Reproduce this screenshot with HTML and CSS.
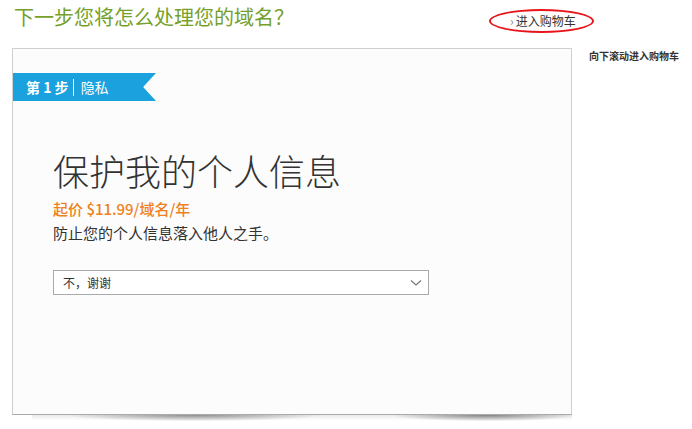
FILE: index.html
```html
<!DOCTYPE html>
<html lang="zh-CN">
<head>
    <meta charset="UTF-8">
    <meta name="viewport" content="width=device-width, initial-scale=1.0">
    <title>下一步您将怎么处理您的域名？</title>
    <link rel="stylesheet" href="styles.css">
</head>
<body>
    <div class="page">
        <div class="main">
            <div class="top">
                <h1 class="headline">下一步您将怎么处理您的域名？</h1>
                <a class="cart-link" href="#"><span class="arrow">›</span>进入购物车</a>
            </div>
            <div class="card">
                <div class="ribbon">
                    <b>第 1 步</b><span class="sep"></span>隐私
                </div>
                <div class="card-body">
                    <h2 class="title">保护我的个人信息</h2>
                    <div class="price">起价 $11.99/域名/年</div>
                    <p class="desc">防止您的个人信息落入他人之手。</p>
                    <div class="select">
                        <span>不，谢谢</span>
                        <svg width="12" height="8" viewBox="0 0 12 8"><path d="M1 1.5 L6 6 L11 1.5" fill="none" stroke="#777" stroke-width="1.2"/></svg>
                    </div>
                </div>
            </div>
            <div class="card-shadow"></div>
        </div>
        <div class="side">向下滚动进入购物车</div>
    </div>
</body>
</html>
```

FILE: styles.css
```css
body {
    margin: 0;
    background: #fff;
    font-family: "Noto Sans CJK SC", "Open Sans", sans-serif;
    color: #333;
}

.page {
    display: flex;
    align-items: flex-start;
}

.main {
    width: 560px;
    margin-left: 12px;
}

.top {
    display: flex;
    align-items: flex-start;
    height: 48px;
    white-space: nowrap;
}

.headline {
    flex-shrink: 0;
    margin: 3px 0 0 2px;
    font-size: 20px;
    font-weight: normal;
    line-height: 28px;
    color: #75a02a;
}

.cart-link {
    position: relative;
    flex-shrink: 0;
    margin: 12px 0 0 216px;
    font-size: 12px;
    line-height: 18px;
    color: #333;
    text-decoration: none;
}

.cart-link::after {
    content: "";
    position: absolute;
    left: -21px;
    top: -3px;
    width: 101px;
    height: 20px;
    border: 2px solid #e8141b;
    border-radius: 50%;
}

.arrow {
    color: #888;
    margin-right: 2px;
}

.card {
    height: 365px;
    border: 1px solid #cfcfcf;
    border-bottom-color: #aaa;
    background: #fcfcfc;
}

.card-shadow {
    height: 8px;
    margin-left: 20px;
    background:
        radial-gradient(ellipse 30% 100% at 30% 0, rgba(0,0,0,0.4), rgba(0,0,0,0) 80%),
        radial-gradient(ellipse 22% 100% at 84% 0, rgba(0,0,0,0.45), rgba(0,0,0,0) 80%),
        linear-gradient(to bottom, rgba(0,0,0,0.08), rgba(0,0,0,0) 70%);
}

.ribbon {
    display: flex;
    align-items: center;
    width: 130px;
    height: 28px;
    margin-top: 24px;
    padding-left: 13px;
    background: #1ba1de;
    color: #fff;
    font-size: 14px;
    clip-path: polygon(0 0, 100% 0, 91% 50%, 100% 100%, 0 100%);
}

.ribbon b {
    font-weight: bold;
}

.sep {
    width: 1px;
    height: 17px;
    background: #fff;
    margin: 0 7px 0 4px;
}

.card-body {
    padding-left: 40px;
}

.title {
    margin: 44px 0 0;
    font-size: 36px;
    font-weight: 300;
    line-height: 50px;
    color: #333;
}

.price {
    margin-top: 4px;
    font-size: 15px;
    font-weight: 500;
    line-height: 20px;
    color: #ee8020;
}

.desc {
    margin: 3px 0 0;
    font-size: 15px;
    line-height: 22px;
}

.select {
    display: flex;
    align-items: center;
    justify-content: space-between;
    box-sizing: border-box;
    width: 376px;
    height: 25px;
    margin-top: 26px;
    padding: 0 6px 0 9px;
    border: 1px solid #aaa;
    background: #fff;
    font-size: 12px;
}

.side {
    margin: 47px 0 0 17px;
    font-size: 10px;
    font-weight: bold;
    line-height: 18px;
}
```
